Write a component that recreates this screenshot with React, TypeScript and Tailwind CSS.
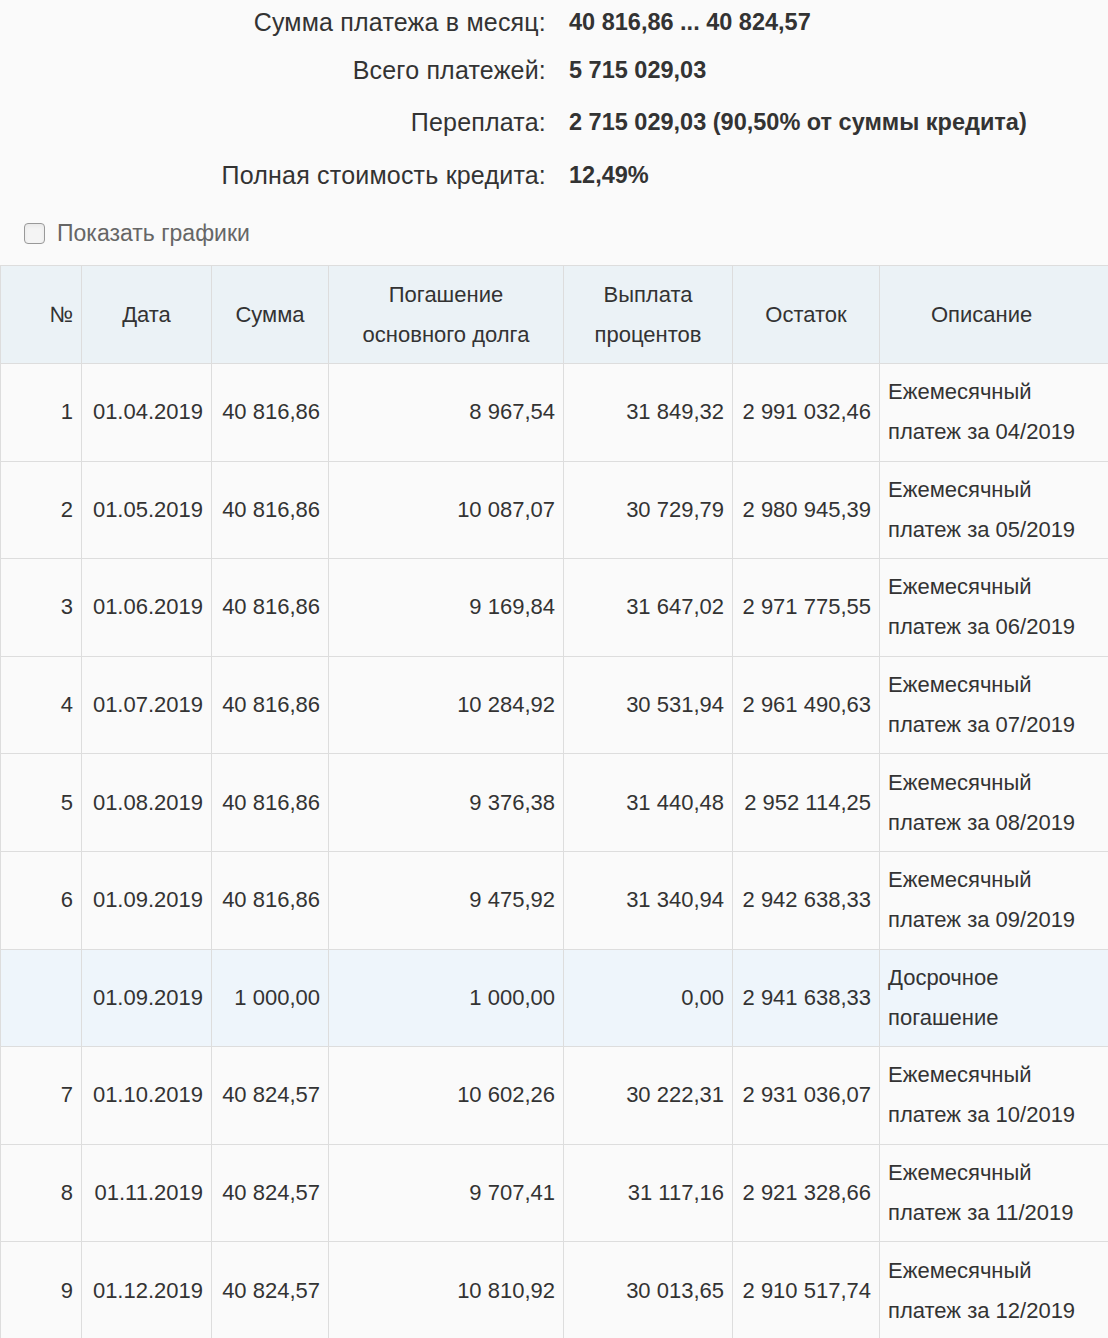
const rows: [string, string, string, string, string, string, string, string, boolean][] = [
  ["1","01.04.2019","40 816,86","8 967,54","31 849,32","2 991 032,46","Ежемесячный","платеж за 04/2019",false],
  ["2","01.05.2019","40 816,86","10 087,07","30 729,79","2 980 945,39","Ежемесячный","платеж за 05/2019",false],
  ["3","01.06.2019","40 816,86","9 169,84","31 647,02","2 971 775,55","Ежемесячный","платеж за 06/2019",false],
  ["4","01.07.2019","40 816,86","10 284,92","30 531,94","2 961 490,63","Ежемесячный","платеж за 07/2019",false],
  ["5","01.08.2019","40 816,86","9 376,38","31 440,48","2 952 114,25","Ежемесячный","платеж за 08/2019",false],
  ["6","01.09.2019","40 816,86","9 475,92","31 340,94","2 942 638,33","Ежемесячный","платеж за 09/2019",false],
  ["","01.09.2019","1 000,00","1 000,00","0,00","2 941 638,33","Досрочное","погашение",true],
  ["7","01.10.2019","40 824,57","10 602,26","30 222,31","2 931 036,07","Ежемесячный","платеж за 10/2019",false],
  ["8","01.11.2019","40 824,57","9 707,41","31 117,16","2 921 328,66","Ежемесячный","платеж за 11/2019",false],
  ["9","01.12.2019","40 824,57","10 810,92","30 013,65","2 910 517,74","Ежемесячный","платеж за 12/2019",false],
];

const summary: [string, string, string][] = [
  ["Сумма платежа в месяц:", "40 816,86 ... 40 824,57", "h-[46px]"],
  ["Всего платежей:", "5 715 029,03", "h-[50px]"],
  ["Переплата:", "2 715 029,03 (90,50% от суммы кредита)", "h-[54px]"],
  ["Полная стоимость кредита:", "12,49%", "h-[52px]"],
];

export default function App() {
  const base = "border border-[#dddddd] px-[8px] align-middle";
  const td = `${base} text-right`;
  return (
    <div className="w-[1108px] h-[1338px] overflow-hidden bg-[#fafafa] text-[#333] text-[22px]" style={{ fontFamily: '"Liberation Sans", Arial, sans-serif' }}>
      <div>
        {summary.map(([l, v, h], i) => (
          <div key={i} className={`flex items-center ${h}`}>
            <div className="w-[546px] text-right text-[25px] tracking-[0.2px]">{l}</div>
            <div className="pl-[23px] font-bold text-[23.5px]">{v}</div>
          </div>
        ))}
      </div>
      <div className="flex items-center h-[50px] mt-[6px] pl-[24px]">
        <div className="w-[21px] h-[21px] rounded-[4px] border border-[#999] bg-[#f4f4f4] shadow-inner" />
        <span className="ml-[12px] text-[23px] text-[#666]">Показать графики</span>
      </div>
      <table className="mt-[7px] w-[1140px] border-collapse table-fixed">
        <colgroup>
          <col className="w-[81px]" />
          <col className="w-[130px]" />
          <col className="w-[117px]" />
          <col className="w-[235px]" />
          <col className="w-[169px]" />
          <col className="w-[147px]" />
          <col />
        </colgroup>
        <thead>
          <tr className="h-[98px] bg-[#ebf2f6] leading-[40px]">
            <th className={`${td} font-normal`}>№</th>
            <th className={`${base} font-normal text-center`}>Дата</th>
            <th className={`${base} font-normal text-center`}>Сумма</th>
            <th className={`${base} font-normal text-center`}>Погашение<br />основного долга</th>
            <th className={`${base} font-normal text-center`}>Выплата<br />процентов</th>
            <th className={`${base} font-normal text-center`}>Остаток</th>
            <th className={`${base} font-normal text-left pl-[51px]`}>Описание</th>
          </tr>
        </thead>
        <tbody>
          {rows.map((r, i) => (
            <tr key={i} className={`h-[97.6px] leading-[40px] ${r[8] ? "bg-[#eef5fb]" : ""}`}>
              <td className={td}>{r[0]}</td>
              <td className={td}>{r[1]}</td>
              <td className={td}>{r[2]}</td>
              <td className={td}>{r[3]}</td>
              <td className={td}>{r[4]}</td>
              <td className={td}>{r[5]}</td>
              <td className={`${base} text-left`}>{r[6]}<br />{r[7]}</td>
            </tr>
          ))}
        </tbody>
      </table>
    </div>
  );
}
